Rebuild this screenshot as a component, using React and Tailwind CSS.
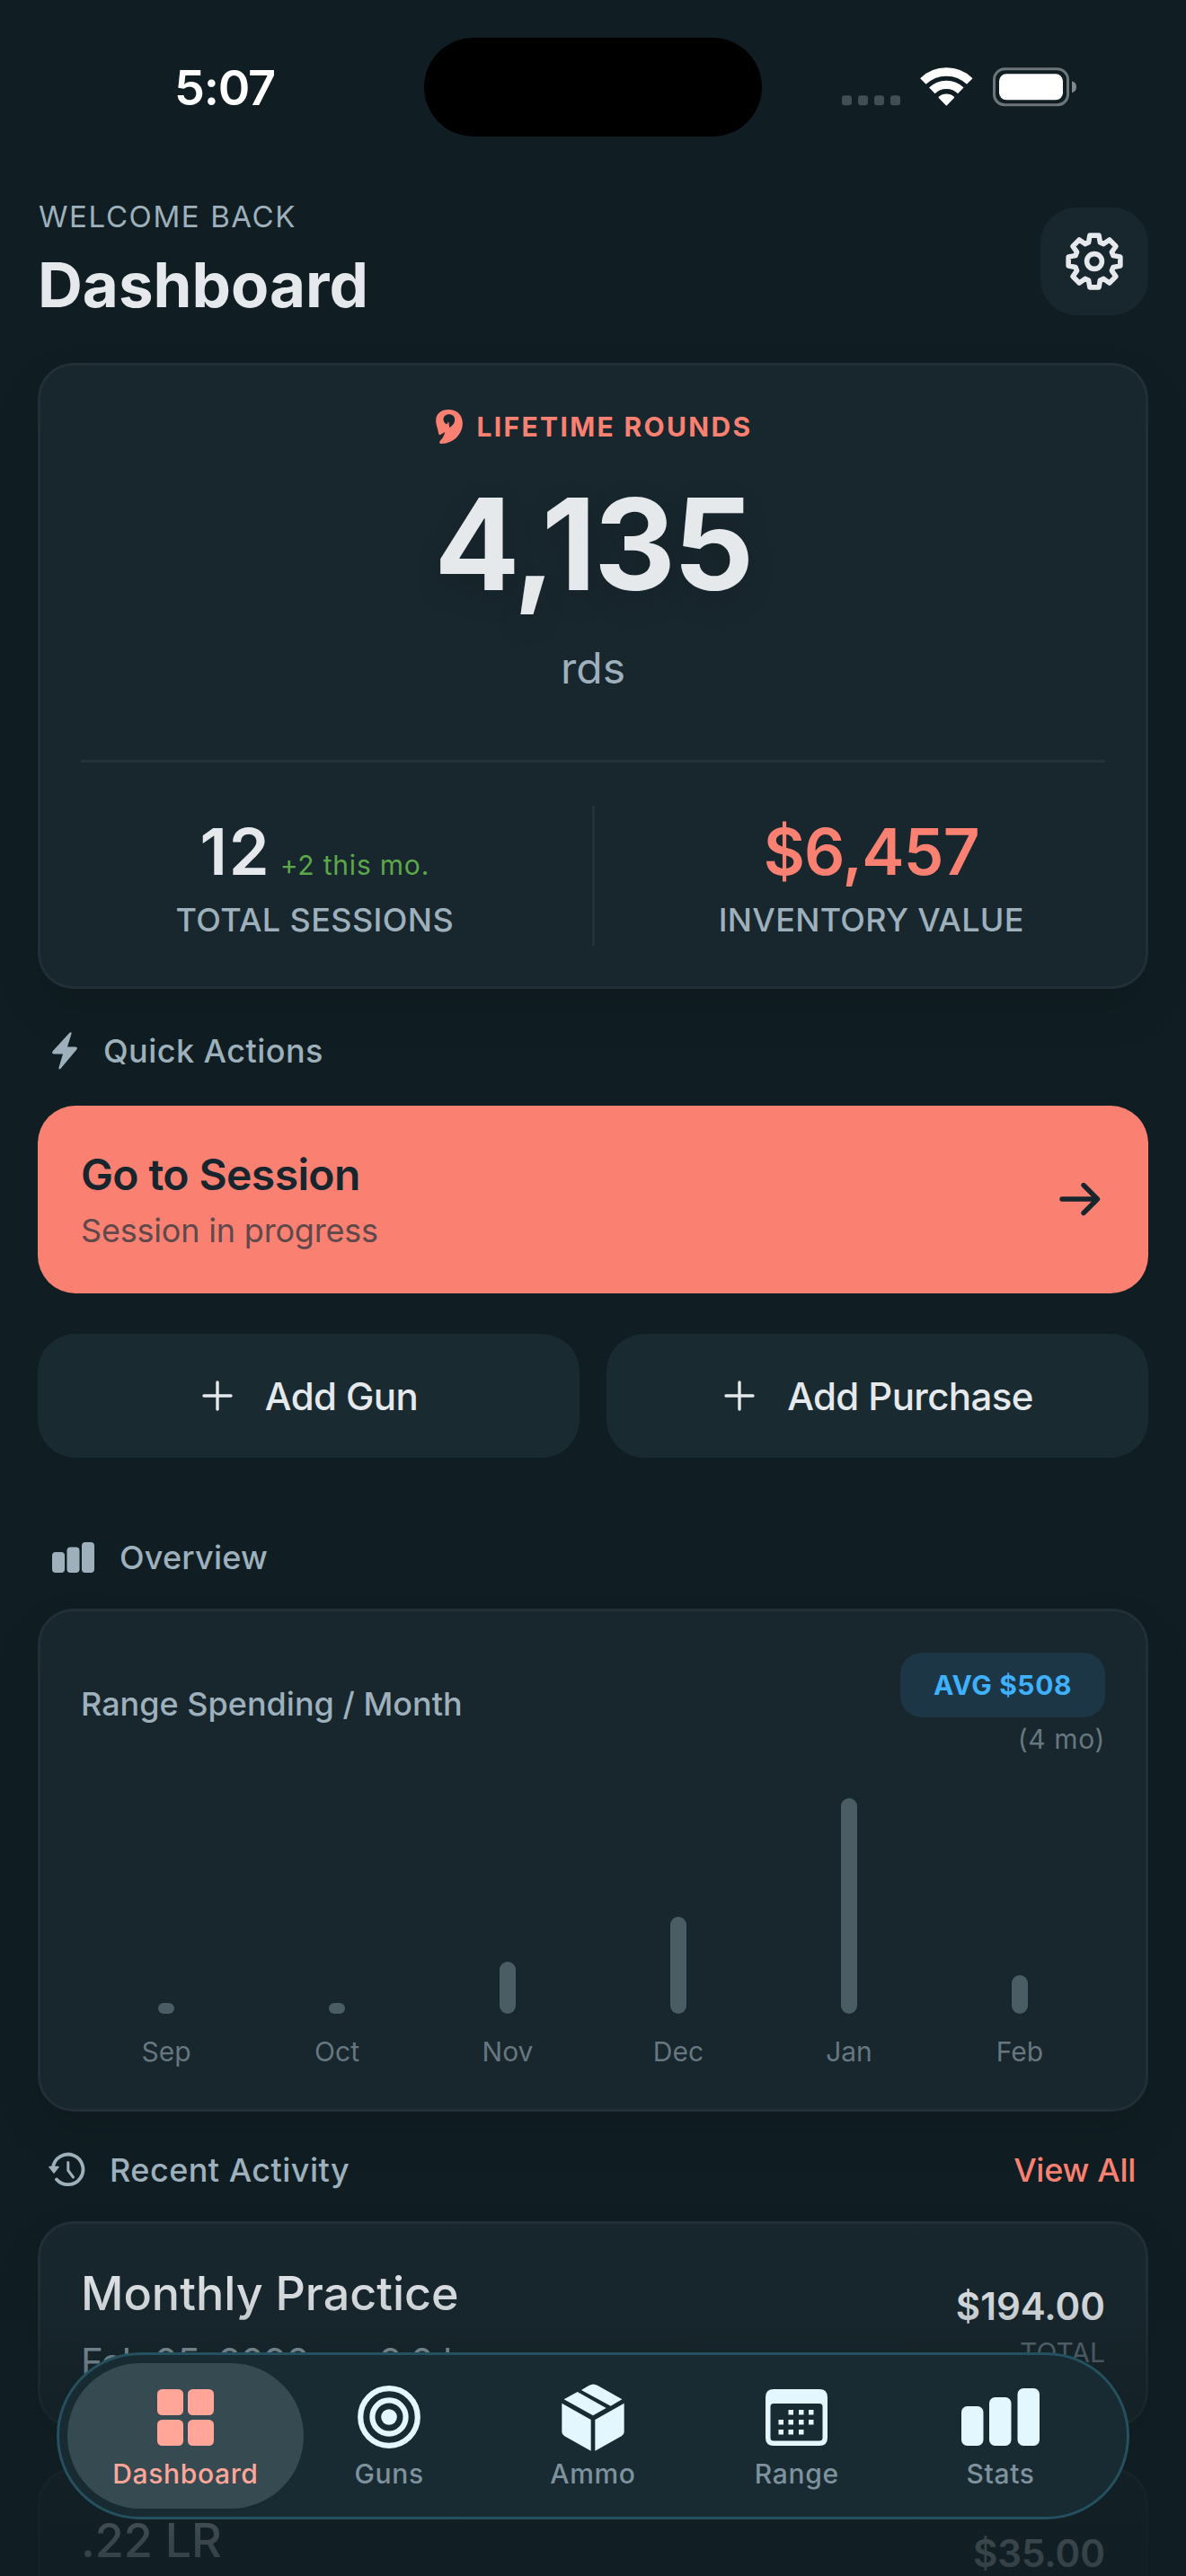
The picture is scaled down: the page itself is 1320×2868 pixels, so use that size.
const SPENDING = [
  { month: "Sep", height: 12 },
  { month: "Oct", height: 12 },
  { month: "Nov", height: 58 },
  { month: "Dec", height: 108 },
  { month: "Jan", height: 240 },
  { month: "Feb", height: 43 },
];

const TABS = [
  { label: "Dashboard", icon: GridIcon, active: true },
  { label: "Guns", icon: TargetIcon },
  { label: "Ammo", icon: BoxIcon },
  { label: "Range", icon: CalendarIcon },
  { label: "Stats", icon: StatsIcon },
];

// outline of an eight tooth cog around 0,0
const COG_POINTS = Array.from({ length: 8 }, (_, i) => {
  const base = i * 45;
  return [
    [-17, 22],
    [-10, 29.3],
    [10, 29.3],
    [17, 22],
  ]
    .map(([deg, r]) => {
      const a = ((base + deg) * Math.PI) / 180;
      return `${(Math.sin(a) * r).toFixed(2)},${(-Math.cos(a) * r).toFixed(2)}`;
    })
    .join(" ");
}).join(" ");

function GearIcon() {
  return (
    <svg width="66" height="66" viewBox="-33 -33 66 66" fill="none" stroke="#e5e9ec" strokeWidth="5.6">
      <polygon points={COG_POINTS} strokeLinejoin="round" />
      <circle r="8.4" />
    </svg>
  );
}

function SignalIcons() {
  return (
    <svg width="262" height="44" viewBox="0 0 786 132">
      <g fill="#424e53">
        <rect x="0" y="94" width="33" height="33" rx="10" />
        <rect x="54" y="94" width="33" height="33" rx="10" />
        <rect x="108" y="94" width="33" height="33" rx="10" />
        <rect x="162" y="94" width="33" height="33" rx="10" />
      </g>
      <g transform="translate(349 127)" fill="none" stroke="#fff" strokeWidth="28">
        <path d="M-77.8-80.5A112 112 0 0 1 77.8-80.5" />
        <path d="M-48-49.6A69 69 0 0 1 48-49.6" />
        <path d="M0-2L-24-27A36 36 0 0 1 24-27Z" fill="#fff" strokeWidth="5" strokeLinejoin="round" />
      </g>
      <rect x="508.500" y="5.500" width="246" height="120" rx="35" fill="none" stroke="#6c7679" strokeWidth="9" />
      <rect x="525" y="22" width="213" height="87" rx="24" fill="#fff" />
      <path d="M768 46Q783 50 783 65.500T768 85Z" fill="#7f888b" />
    </svg>
  );
}

function FlameIcon() {
  return (
    <svg width="30" height="38" viewBox="0 0 89 114" fill="#fa8072">
      <path
        fillRule="evenodd"
        d="M42 0C70 0 89 18 89 46C89 84 56 114 18 114C11 114 10 108 16 102C24 94 28 86 30 75L15 84Q10 86 9 80L5 62C1 52 0 42 0 36C0 14 18 0 42 0ZM44 16C33 16 25 23 25 33C25 40 29 45 34 48C38 50 39 46 40 42L43 43L45 60C56 54 63 46 63 34C63 23 55 16 44 16Z"
      />
    </svg>
  );
}

function BoltIcon() {
  return (
    <svg width="28" height="42" viewBox="0 0 28 42" fill="#9db0bb">
      <path d="M19.500 0.800Q22-1 21.500 2L17 16.500H26Q29 16.800 27.300 19.500L9.500 40.800Q7 42.500 7.500 39.500L12 24.500H2Q-1 24 0.700 21.300Z" />
    </svg>
  );
}

function BarsIcon() {
  return (
    <svg width="47" height="34" viewBox="0 0 47 34" fill="#9db0bb">
      <rect x="0" y="11" width="14" height="23" rx="4" />
      <rect x="16.500" y="5.500" width="14" height="28.500" rx="4" />
      <rect x="33" y="0" width="14" height="34" rx="4" />
    </svg>
  );
}

function HistoryIcon() {
  return (
    <svg width="42" height="40" viewBox="0 0 42 40" fill="none" stroke="#9db0bb" strokeWidth="3.800" strokeLinecap="round">
      <path d="M5 17A16.800 16.800 0 1 1 9 30.500" />
      <path d="M21.800 11.500V20.500L27.500 28" strokeWidth="3" />
      <path d="M1 16.500H11L6 23Z" fill="#9db0bb" strokeWidth="1.500" strokeLinejoin="round" />
    </svg>
  );
}

function PlusIcon() {
  return (
    <svg width="34" height="34" viewBox="0 0 34 34" stroke="#e5e9ec" strokeWidth="3.400" strokeLinecap="round">
      <path d="M17 2V32M2 17H32" />
    </svg>
  );
}

function ArrowIcon() {
  return (
    <svg width="46" height="38" viewBox="0 0 46 38" fill="none" stroke="#17252c" strokeWidth="5.400" strokeLinecap="round" strokeLinejoin="round">
      <path d="M3 19H42M27 3.500L42.500 19L27 34.500" />
    </svg>
  );
}

function GridIcon() {
  return (
    <svg width="63" height="63" viewBox="0 0 63 63" fill="#ffa699">
      <rect x="0" y="0" width="29" height="29" rx="5.500" />
      <rect x="34" y="0" width="29" height="29" rx="5.500" />
      <rect x="0" y="34" width="29" height="29" rx="5.500" />
      <rect x="34" y="34" width="29" height="29" rx="5.500" />
    </svg>
  );
}

function TargetIcon() {
  return (
    <svg width="70" height="70" viewBox="-35 -35 70 70" fill="none" stroke="#e3f7ff" strokeWidth="6.200">
      <circle r="31.800" />
      <circle r="18.600" />
      <circle r="8.800" fill="#e3f7ff" stroke="none" />
    </svg>
  );
}

function BoxIcon() {
  return (
    <svg width="70" height="75" viewBox="72 41 210 225" fill="#e3f7ff">
      <path d="M73 106L170 161V265L82 216Q73 211 73 202Z" />
      <path d="M281 106L184 161V265L272 216Q281 211 281 202Z" />
      <path d="M80 93L125 68L221 122L177 147Z" />
      <path d="M138 62L163 47Q178 38 193 47L274 93L236 115Z" />
    </svg>
  );
}

function CalendarIcon() {
  return (
    <svg width="69" height="63" viewBox="0 0 69 63" fill="#e3f7ff">
      <path
        fillRule="evenodd"
        d="M9 0H60Q69 0 69 9V54Q69 63 60 63H9Q0 63 0 54V9Q0 0 9 0ZM9 16Q5.500 16 5.500 19.500V54Q5.500 57.500 9 57.500H60Q63.500 57.500 63.500 54V19.500Q63.500 16 60 16Z"
      />
      <path d="M25.500 23h5.500v5.500h-5.500zM37 23h5.500v5.500H37zM48 23h5.500v5.500H48zM14.500 34h5.500v5.500h-5.500zM25.500 34h5.500v5.500h-5.500zM37 34h5.500v5.500H37zM48 34h5.500v5.500H48zM14.500 45h5.500v5.500h-5.500zM25.500 45h5.500v5.500h-5.500zM37 45h5.500v5.500H37z" />
    </svg>
  );
}

function StatsIcon() {
  return (
    <svg width="87" height="64" viewBox="0 0 87 64" fill="#e3f7ff">
      <rect x="0" y="20" width="24.500" height="44" rx="6.500" />
      <rect x="31" y="10" width="24.500" height="54" rx="6.500" />
      <rect x="62.500" y="0" width="24.500" height="64" rx="6.500" />
    </svg>
  );
}

function StatusBar() {
  return (
    <div className="flex h-[194px] pt-[42px]">
      <div className="flex h-[110px] w-[472px] items-center pl-[194px] text-[54px] font-semibold tracking-[-1.25px] text-white">
        5:07
      </div>
      <div className="h-[110px] w-[376px] rounded-full bg-black" />
      <div className="flex h-[110px] items-center pl-[89px]">
        <SignalIcons />
      </div>
    </div>
  );
}

function Header() {
  return (
    <div className="flex h-[210px] justify-between px-[42px] pt-[27px]">
      <div>
        <p className="pl-px text-[33px] leading-[40px] tracking-[1.6px] text-[#9db0bb]">WELCOME BACK</p>
        <h1 className="mt-4 text-[69px] leading-[80px] font-bold text-[#e5e9ec]">Dashboard</h1>
      </div>
      <button className="mt-[10px] flex size-[120px] items-center justify-center rounded-[40px] bg-[#18262d]">
        <GearIcon />
      </button>
    </div>
  );
}

function Card({ className, children }) {
  return (
    <section
      className={`rounded-[40px] border-[3px] border-[#222f36] bg-[#18262d] px-[45px] shadow-[0_24px_48px_rgba(0,0,0,0.15)] ${className}`}
    >
      {children}
    </section>
  );
}

function LifetimeCard() {
  return (
    <Card className="h-[697px] pt-12">
      <div className="flex h-10 items-center justify-center gap-4 pl-[2px]">
        <FlameIcon />
        <span className="text-[30px] leading-[40px] font-bold tracking-[2.34px] text-[#fa8072]">LIFETIME ROUNDS</span>
      </div>
      <p className="mt-[41px] text-center text-[141px] leading-[140px] font-bold tracking-[-2.7px] text-[#e5e9ec] [text-shadow:0_12px_36px_rgba(0,0,0,0.1)]">
        4,135
      </p>
      <p className="mt-[38px] text-center text-[48px] leading-[60px] text-[#9db0bb]">rds</p>
      <div className="mt-[72px] h-[3px] bg-[#243238]" />
      <div className="mt-12 flex h-[156px] gap-12 text-center">
        <div className="flex-1 pt-[9px]">
          <div className="flex h-[84px] items-baseline justify-center gap-[10px]">
            <span className="text-[72px] leading-[84px] font-semibold tracking-[2px] text-[#e5e9ec]">12</span>
            <span className="text-[30px] leading-[40px] tracking-[0.8px] text-[#5ca84a]">+2 this mo.</span>
          </div>
          <p className="mt-3 text-[36px] leading-[44px] font-medium tracking-[0.39px] text-[#9db0bb]">TOTAL SESSIONS</p>
        </div>
        <div className="w-[3px] bg-[#243238]" />
        <div className="flex-1 pt-[9px]">
          <p className="text-[71px] leading-[84px] font-semibold tracking-[-0.8px] text-[#fa8072]">$6,457</p>
          <p className="mt-3 text-[36px] leading-[44px] font-medium tracking-[0.28px] text-[#9db0bb]">INVENTORY VALUE</p>
        </div>
      </div>
    </Card>
  );
}

function QuickActions() {
  return (
    <>
      <div className="mt-[47px] flex h-11 items-center gap-[29px] pl-4">
        <BoltIcon />
        <h2 className="text-[36px] font-medium tracking-[0.45px] text-[#9db0bb]">Quick Actions</h2>
      </div>
      <button className="mt-[39px] flex h-[209px] w-full items-center justify-between rounded-[42px] bg-[#fa8072] pr-[53px] pb-[1px] pl-12 text-left">
        <div>
          <p className="text-[48px] leading-[60px] font-semibold tracking-[-0.6px] text-[#17252c]">Go to Session</p>
          <p className="mt-[10px] text-[36px] leading-[44px] tracking-[-0.19px] text-[#5f494b]">Session in progress</p>
        </div>
        <ArrowIcon />
      </button>
      <div className="mt-[45px] flex gap-[30px] text-[42px] font-medium tracking-[-0.6px] text-[#e5e9ec]">
        <button className="flex h-[138px] flex-1 items-center justify-center gap-9 rounded-[42px] bg-[#192a31] pl-[3px]">
          <PlusIcon />
          Add Gun
        </button>
        <button className="flex h-[138px] flex-1 items-center justify-center gap-9 rounded-[42px] bg-[#192a31] pl-[3px]">
          <PlusIcon />
          Add Purchase
        </button>
      </div>
    </>
  );
}

function Overview() {
  return (
    <>
      <div className="mt-[89px] flex h-11 items-center gap-7 pl-4">
        <BarsIcon />
        <h2 className="text-[36px] font-medium tracking-[0.2px] text-[#9db0bb]">Overview</h2>
      </div>
      <Card className="mt-[35px] flex h-[560px] flex-col justify-between pt-[46px] pb-[44px]">
        <div className="flex items-center justify-between">
          <h3 className="pb-[3px] text-[36px] font-medium text-[#9db0bb]">Range Spending / Month</h3>
          <div className="flex flex-col items-end">
            <span className="flex h-[72px] w-[228px] items-center justify-center rounded-[24px] bg-[#1c3645] text-[30px] font-bold tracking-[0.6px] text-[#3fb0fb]">
              AVG $508
            </span>
            <span className="mt-1 text-[30px] leading-[40px] tracking-[0.6px] text-[#66777f]">(4 mo)</span>
          </div>
        </div>
        <div className="flex">
          {SPENDING.map(({ month, height }) => (
            <div key={month} className="flex flex-1 flex-col items-center justify-end">
              <div className="w-[18px] rounded-[9px] bg-[#4a5d65]" style={{ height }} />
              <span className="mt-[22px] text-[30px] leading-[40px] text-[#66777f]">{month}</span>
            </div>
          ))}
        </div>
      </Card>
    </>
  );
}

function ActivityCard({ title, date, duration, price, note, className }) {
  return (
    <Card className={`flex h-[230px] justify-between pt-[46px] ${className}`}>
      <div>
        <p className="text-[52px] leading-[64px] font-medium text-[#e5e9ec]">{title}</p>
        {date && (
          <p className="mt-[22px] flex gap-[28px] text-[42px] leading-[44px] tracking-[-0.9px] text-[#9db0bb]">
            <span>{date}</span>
            <span>•</span>
            <span>{duration}</span>
          </p>
        )}
      </div>
      <div className="pt-[21px] text-right">
        <p className="text-[42px] leading-[50px] font-semibold text-[#e5e9ec]">{price}</p>
        {note && <p className="mt-[6px] text-[30px] leading-[40px] text-[#66777f]">{note}</p>}
      </div>
    </Card>
  );
}

function RecentActivity() {
  return (
    <>
      <div className="mt-[43px] flex h-11 items-center pr-[14px] pl-3">
        <HistoryIcon />
        <h2 className="ml-[26px] flex-1 text-[36px] font-medium tracking-[0.46px] text-[#9db0bb]">Recent Activity</h2>
        <a className="text-[36px] font-medium tracking-[-0.3px] text-[#fa8072]">View All</a>
      </div>
      <ActivityCard
        className="mt-[35px]"
        title="Monthly Practice"
        date="Feb 05, 2026"
        duration="2.0 h"
        price="$194.00"
        note="TOTAL"
      />
      <ActivityCard className="mt-[45px]" title=".22 LR" price="$35.00" />
    </>
  );
}

function TabBar() {
  return (
    <nav className="absolute top-[2619px] left-[63px] flex h-[186px] w-[1194px] rounded-full border-[3px] border-[#24505f] bg-[#192b32] px-[27px]">
      {TABS.map(({ label, icon: Icon, active }) => (
        <div key={label} className="relative flex flex-1 justify-center pt-8">
          {active && <div className="absolute inset-x-[-18px] top-[9px] h-[162px] rounded-full bg-[#364a52]" />}
          <div className="relative flex flex-col items-center">
            <div className="flex h-[74px] items-center">
              <Icon />
            </div>
            <span
              className={`mt-[6px] text-[30px] leading-[40px] font-medium tracking-[0.65px] ${active ? "text-[#ffa699]" : "text-[#7d929d]"}`}
            >
              {label}
            </span>
          </div>
        </div>
      ))}
    </nav>
  );
}

export default function App() {
  return (
    <div className="relative h-[2868px] w-[1320px] overflow-hidden bg-[#101e23] font-['Inter',sans-serif]">
      <StatusBar />
      <Header />
      <main className="px-[42px]">
        <LifetimeCard />
        <QuickActions />
        <Overview />
        <RecentActivity />
      </main>
      {/* content fades out under the tab bar */}
      <div className="absolute inset-x-0 bottom-0 h-[438px] bg-[linear-gradient(to_bottom,rgba(16,30,35,0)_0%,rgba(16,30,35,0.04)_24%,rgba(16,30,35,0.13)_33%,rgba(16,30,35,0.34)_43%,rgba(16,30,35,0.6)_65%,rgba(16,30,35,0.8)_90%,rgba(16,30,35,0.84)_100%)]" />
      <TabBar />
    </div>
  );
}
